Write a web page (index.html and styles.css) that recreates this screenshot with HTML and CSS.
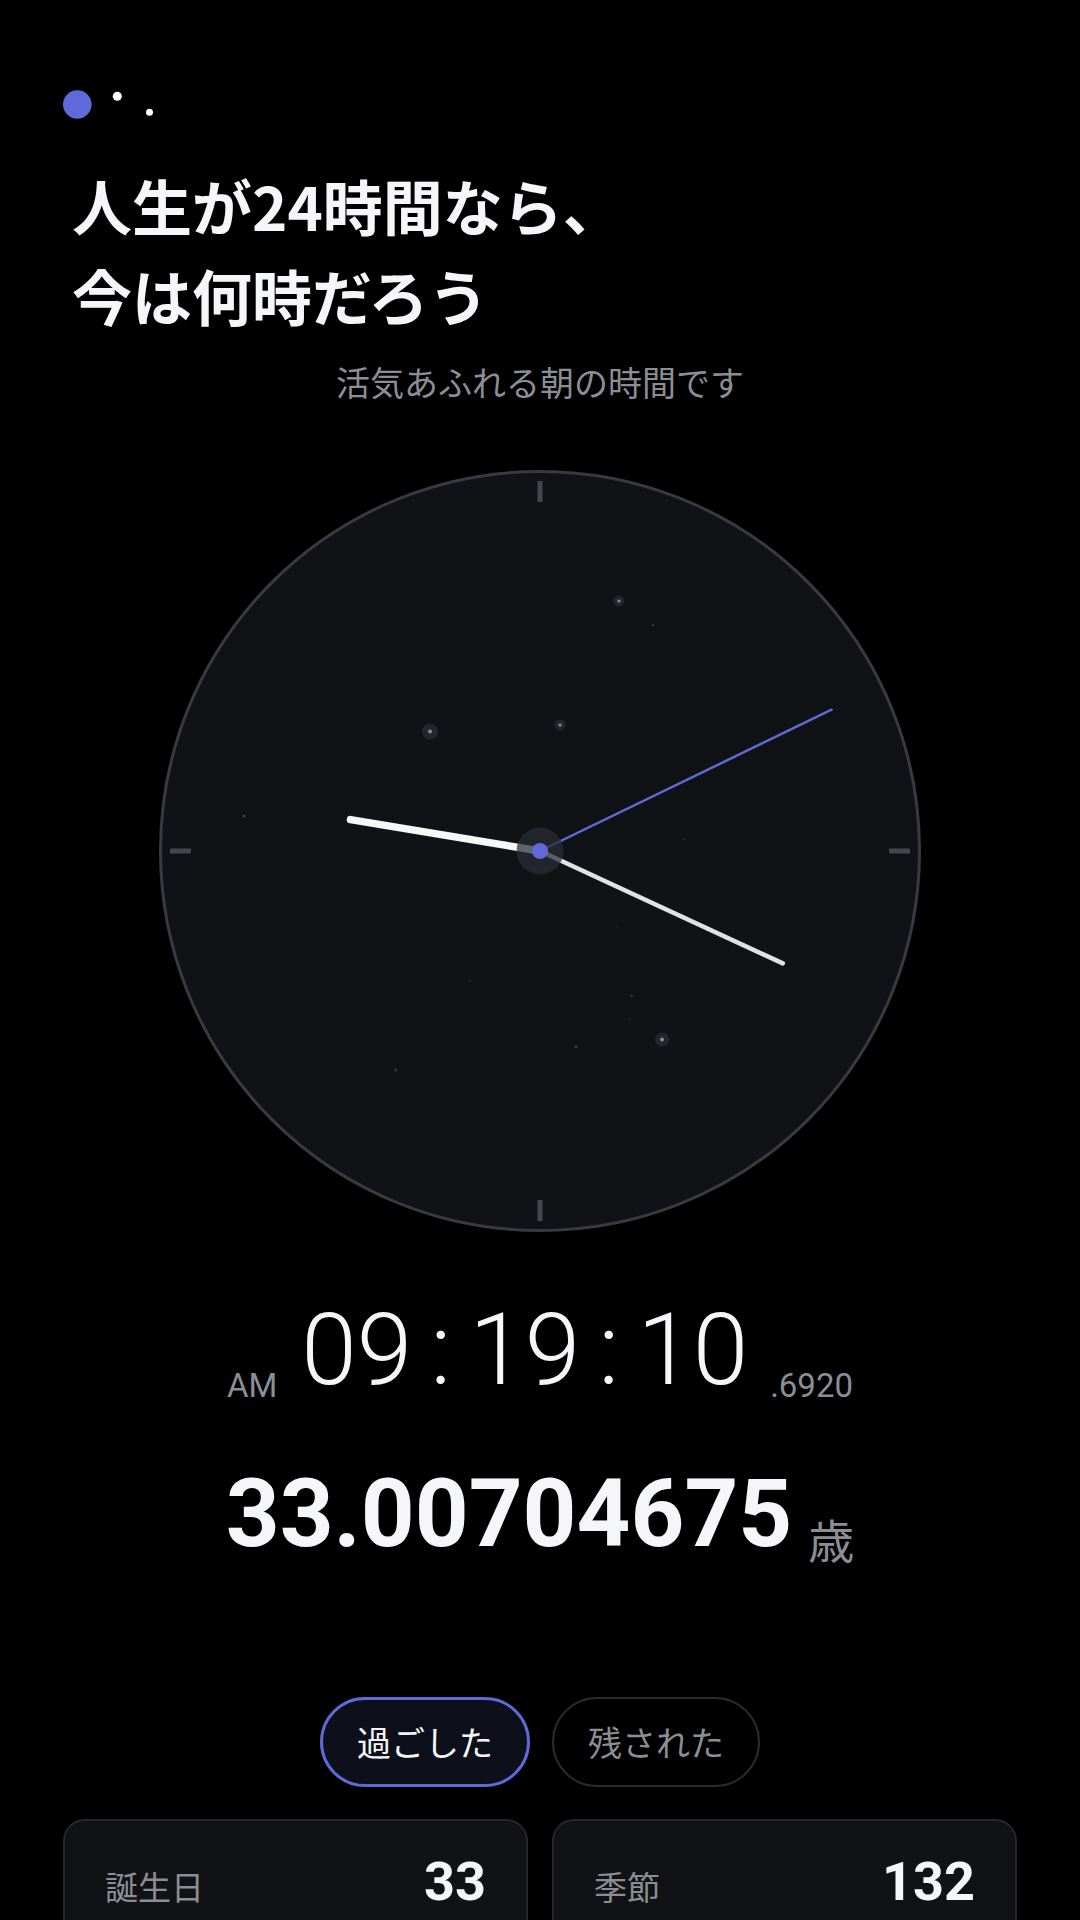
FILE: index.html
```html
<!DOCTYPE html>
<html lang="ja">
<head>
<meta charset="utf-8">
<title>人生時計</title>
<link rel="stylesheet" href="styles.css">
</head>
<body>
<main class="page">
  <svg class="logo" width="92" height="30" viewBox="0 0 92 30" aria-hidden="true">
    <circle cx="14.3" cy="14.5" r="14.3" fill="#5f6ad8"/>
    <circle cx="54.3" cy="6.3" r="4.5" fill="#ffffff"/>
    <circle cx="86.5" cy="22.3" r="3.5" fill="#ffffff"/>
  </svg>

  <h1 class="headline">人生が24時間なら、<br>今は何時だろう</h1>
  <p class="subtitle">活気あふれる朝の時間です</p>

  <div class="clock">
    <svg width="762" height="762" viewBox="0 0 762 762">
      <circle cx="381" cy="381" r="379.5" fill="#111215" stroke="#393a41" stroke-width="3"/>
      <g stroke="#45464c" stroke-width="5">
        <line x1="381" y1="11" x2="381" y2="32"/>
        <line x1="381" y1="730" x2="381" y2="751"/>
        <line x1="11" y1="381" x2="32" y2="381"/>
        <line x1="730" y1="381" x2="751" y2="381"/>
      </g>
      <g>
        <circle cx="460" cy="131" r="5.5" fill="#25262b"/><circle cx="460" cy="131" r="1.6" fill="#8a8b90"/>
        <circle cx="271" cy="261.6" r="8" fill="#25262b"/><circle cx="271" cy="261.6" r="2" fill="#8a8b90"/>
        <circle cx="401" cy="255" r="5.5" fill="#25262b"/><circle cx="401" cy="255" r="1.6" fill="#8a8b90"/>
        <circle cx="503" cy="569.5" r="7" fill="#25262b"/><circle cx="503" cy="569.5" r="2" fill="#8a8b90"/>
        <circle cx="494" cy="155" r="1.2" fill="#3a3b40"/>
        <circle cx="85" cy="346" r="1.6" fill="#3c3d42"/>
        <circle cx="525" cy="369" r="1" fill="#2e2f34"/>
        <circle cx="458.6" cy="457.6" r="0.8" fill="#2e2f34"/>
        <circle cx="311" cy="511" r="1" fill="#2e2f34"/>
        <circle cx="472.6" cy="525.8" r="1.4" fill="#36373c"/>
        <circle cx="471" cy="548.7" r="0.9" fill="#2e2f34"/>
        <circle cx="417" cy="576.5" r="1.6" fill="#3a3b40"/>
        <circle cx="236.8" cy="600" r="1.6" fill="#36373c"/>
      </g>
      <line x1="381" y1="381" x2="191.5" y2="349.6" stroke="#f7f7f8" stroke-width="7.5" stroke-linecap="round"/>
      <line x1="381" y1="381" x2="623.8" y2="493.4" stroke="#e2e2e5" stroke-width="4.5" stroke-linecap="round"/>
      <line x1="381" y1="381" x2="672.6" y2="239.7" stroke="#5f6ad8" stroke-width="2.5" stroke-linecap="round"/>
      <circle cx="381" cy="381" r="23.5" fill="rgba(42,44,54,0.72)"/>
      <circle cx="381" cy="381" r="8" fill="#5f6ad8"/>
    </svg>
  </div>

  <div class="time">
    <span class="ampm">AM</span>
    <span class="hms">09<span class="colon">:</span>19<span class="colon">:</span>10</span>
    <span class="ms">.6920</span>
  </div>

  <div class="age">
    <span class="age-num">33.00704675</span>
    <span class="age-unit">歳</span>
  </div>

  <div class="toggle">
    <button class="pill pill-active">過ごした</button>
    <button class="pill">残された</button>
  </div>

  <div class="cards">
    <div class="card">
      <div class="card-row">
        <span class="card-label">誕生日</span>
        <span class="card-value">33</span>
      </div>
    </div>
    <div class="card">
      <div class="card-row">
        <span class="card-label">季節</span>
        <span class="card-value">132</span>
      </div>
    </div>
  </div>
</main>
</body>
</html>
```

FILE: styles.css
```css
* { box-sizing: border-box; }

html, body {
  margin: 0;
  padding: 0;
  background: #000;
}

body {
  font-family: "Noto Sans CJK JP", "Noto Sans", sans-serif;
  color: #f5f6f7;
  overflow: hidden;
}

.page {
  padding: 90px 63px 0;
}

.logo {
  display: block;
}

.headline {
  margin: 40px 0 0;
  padding-left: 9px;
  font-size: 60px;
  line-height: 90px;
  font-weight: 700;
  color: #f5f6f7;
}

.subtitle {
  margin: 16px 0 0;
  text-align: center;
  font-size: 34px;
  line-height: 51px;
  color: #8b8e94;
  font-weight: 400;
}

.clock {
  margin: 63px auto 0;
  width: 762px;
  height: 762px;
}

.clock svg {
  display: block;
}

.time {
  margin-top: 68px;
  display: flex;
  justify-content: center;
  align-items: flex-end;
  font-family: Roboto, sans-serif;
}

.ampm,
.ms {
  font-size: 33px;
  line-height: 1;
  color: #8b8e94;
  font-weight: 400;
  margin-bottom: -2px;
}

.ampm { margin-right: 24px; }
.ms { margin-left: 22px; }

.hms {
  font-size: 100px;
  line-height: 1;
  font-weight: 300;
  color: #f5f6f7;
}

.colon {
  margin: 0 18px;
}

.age {
  margin-top: 67px;
  display: flex;
  justify-content: center;
  align-items: flex-end;
}

.age-num {
  font-family: Roboto, sans-serif;
  font-size: 94px;
  line-height: 1;
  font-weight: 700;
  color: #f5f6f7;
}

.age-unit {
  margin-left: 16px;
  font-size: 46px;
  line-height: 1;
  color: #8b8e94;
}

.toggle {
  margin-top: 136px;
  display: flex;
  justify-content: center;
  gap: 22px;
}

.pill {
  height: 90px;
  padding: 0 34px;
  border-radius: 45px;
  border: 2.5px solid #2a2a30;
  background: #000;
  color: #8b8e94;
  font-family: "Noto Sans CJK JP", sans-serif;
  font-size: 34px;
  line-height: 1;
  display: flex;
  align-items: center;
  justify-content: center;
}

.pill-active {
  border: 3px solid #5f6ad8;
  background: #0d0f1b;
  color: #f5f6f7;
}

.cards {
  margin-top: 32px;
  display: grid;
  grid-template-columns: 1fr 1fr;
  gap: 24px;
}

.card {
  height: 220px;
  border: 2px solid #26272c;
  border-radius: 22px;
  background: #111215;
  padding: 34px 40px;
}

.card-row {
  display: flex;
  justify-content: space-between;
  align-items: baseline;
}

.card-label {
  font-size: 33px;
  color: #8b8e94;
}

.card-value {
  font-family: Roboto, sans-serif;
  font-size: 54px;
  line-height: 1;
  font-weight: 700;
  color: #f5f6f7;
}
```
